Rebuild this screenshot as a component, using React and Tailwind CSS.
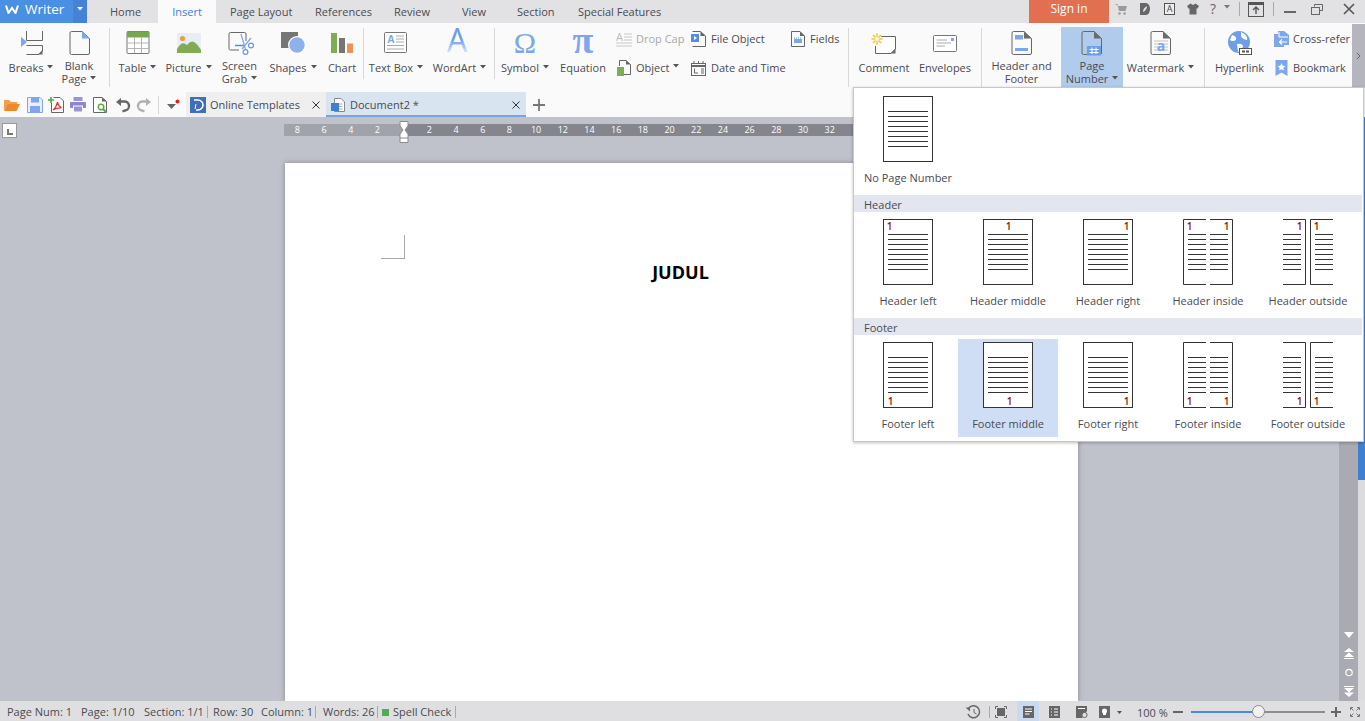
import React from "react";

const G = "#6b6b6b";
const B = "#7ea6ea";

const Caret = ({ c = "#555" }) => (
  <svg width="6" height="4" viewBox="0 0 6 4" className="inline-block ml-[4px] mb-[4px]"><path d="M0 0H6L3 3.5Z" fill={c} /></svg>
);

const I = ({ children, w = 32, h = 28, className = "" }) => (
  <svg width={w} height={h} viewBox={`0 0 ${w} ${h}`} className={`shrink-0 overflow-visible ${className}`}>{children}</svg>
);

const Doc = ({ x = 8, fold = G }) => (
  <>
    <path d={`M${x + 1.5} 2.5H${x + 12}L${x + 19.5} 9.5V24Q${x + 19.5} 25.5 ${x + 18} 25.5H${x + 1.5}Q${x} 25.5 ${x} 24V4Q${x} 2.5 ${x + 1.5} 2.5Z`} fill="#fff" fillOpacity="0" stroke="#666" />
    <path d={`M${x + 12} 2.5L${x + 19.5} 9.5H${x + 12}Z`} fill={fold} />
  </>
);

const icons = {
  breaks: (
    <I>
      <path d="M11.5 2V11.5H27.5V2" fill="none" stroke="#666" />
      <path d="M11.5 16.5H27.5V22L24 25.5H11.5" fill="none" stroke="#666" />
      <path d="M27.5 21V25.5H23Z" fill="#666" />
      <path d="M6 8L12 13L6 18Z" fill={B} />
    </I>
  ),
  blank: <I><Doc x={7} fold={B} /></I>,
  table: (
    <I>
      <rect x="5" y="2.5" width="22" height="22" rx="1" fill="#fff" stroke="#777" />
      <rect x="5" y="2.5" width="22" height="6" fill="#76a852" />
      <path d="M5 14H27M5 19.5H27M12.5 8.5V24M19.5 8.5V24" stroke="#b5b5b5" />
    </I>
  ),
  picture: (
    <I>
      <rect x="4" y="4" width="24" height="20" fill="#e9eef4" />
      <circle cx="9.5" cy="9.5" r="2.6" fill="#ee9a4d" />
      <path d="M4 24V20Q9 11 14 16Q20 7 28 21V24Z" fill="#7fac55" />
    </I>
  ),
  grab: (
    <I>
      <path d="M22 12V5Q22 3.5 20.5 3.5H6.5Q5 3.5 5 5V19.5Q5 21 6.5 21H15" fill="none" stroke="#666" />
      <path d="M11 16.5H21" stroke="#5a8be0" strokeWidth="1.5" />
      <path d="M17 5L22 22M27 9L18 20" stroke="#7ea6ea" strokeWidth="1.2" />
      <circle cx="21.5" cy="23" r="2.4" fill="#fff" stroke="#6a96e2" strokeWidth="1.2" />
      <circle cx="27" cy="16.5" r="2.4" fill="#fff" stroke="#6a96e2" strokeWidth="1.2" />
    </I>
  ),
  shapes: (
    <I>
      <rect x="4" y="3" width="17" height="16" fill="#757575" />
      <circle cx="20" cy="16" r="9" fill="#fff" />
      <circle cx="20" cy="16" r="7.7" fill="#8eb1ec" />
    </I>
  ),
  chart: (
    <I>
      <rect x="5" y="4" width="6" height="20" fill="#7fac55" />
      <rect x="13" y="9" width="6" height="15" fill="#757575" />
      <rect x="21" y="14.5" width="6" height="9.5" fill="#ec9358" />
    </I>
  ),
  textbox: (
    <I>
      <rect x="4.5" y="3.5" width="22" height="20" rx="1" fill="#fff" stroke="#777" />
      <text x="7.5" y="14" fontSize="10" fontWeight="700" fontFamily="Open Sans" fill={B}>A</text>
      <path d="M16 7H24M16 10H24M16 13H24M7 16.5H24M7 20H24" stroke="#aaa" />
    </I>
  ),
  wordart: (
    <I>
      <defs><linearGradient id="wa" x1="0" y1="0" x2="0" y2="1"><stop offset="0.5" stopColor="#6f9de8" /><stop offset="0.85" stopColor="#e4edfb" /></linearGradient></defs>
      <text x="13" y="23" textAnchor="middle" fontSize="32" fontFamily="Open Sans" fill="url(#wa)">A</text>
    </I>
  ),
  symbol: <I><text x="16" y="24" textAnchor="middle" fontSize="30" fontFamily="Liberation Serif" fill={B}>Ω</text></I>,
  pi: <I><text x="16" y="24" textAnchor="middle" fontSize="38" fontWeight="700" fontFamily="Liberation Serif" fill={B}>π</text></I>,
  comment: (
    <I>
      <path d="M7.5 7.5H27.5V20L23 24.5H7.5V17" fill="#fff" stroke="#666" />
      <path d="M27.5 19.5V24.5H22.5Z" fill="#666" />
      <circle cx="9" cy="10" r="5" fill="#fff" />
      <g stroke="#f4c531" strokeWidth="1.5"><path d="M9 4.5V15.5M3.5 10H14.5M5 6L13 14M13 6L5 14" /></g>
      <circle cx="9" cy="10" r="2" fill="#fff" />
    </I>
  ),
  envelope: (
    <I>
      <rect x="4.5" y="6.5" width="23" height="16" rx="1" fill="#fff" stroke="#777" />
      <rect x="22" y="9" width="3" height="3" fill={B} />
      <path d="M7.5 11H18M7.5 14H22M7.5 17H16" stroke="#aaa" />
    </I>
  ),
  hf: (
    <I>
      <Doc x={6} />
      <rect x="9" y="6" width="8" height="4.5" fill={B} />
      <rect x="9" y="19" width="13" height="3" fill={B} />
    </I>
  ),
  pn: (
    <I>
      <Doc x={6} />
      <rect x="11" y="17" width="14" height="9.5" fill="#6f9de8" />
      <path d="M16 18.5V25M20 18.5V25M13.5 20.5H22.5M13.5 23.5H22.5" stroke="#fff" />
    </I>
  ),
  watermark: (
    <I>
      <Doc x={6} />
      <path d="M9 12H23M9 15H23M9 18H23M9 21H23" stroke="#c2c2c2" />
      <text x="16" y="22" textAnchor="middle" fontSize="14" fontWeight="700" fontFamily="Open Sans" fill={B}>a</text>
    </I>
  ),
  link: (
    <I>
      <circle cx="15" cy="13" r="11" fill="#6f9de8" />
      <path d="M8 6Q13 7 12 11Q8 13 6 11ZM17 3Q24 6 23 11Q18 10 17 7ZM13 15Q19 14 19 18Q16 22 14 23Z" fill="#fff" />
      <rect x="15.5" y="19.5" width="12" height="6" fill="#fff" stroke="#555" />
      <path d="M18 22.5H25" stroke="#555" strokeWidth="2" strokeDasharray="3 1" />
    </I>
  ),
};

const Sep = ({ tall = true, className = "" }) => (
  <div className={`w-px shrink-0 bg-[#d8d8d8] mt-[1px] ${tall ? "h-[59px]" : "h-[51px]"} ${className}`} />
);

const Big = ({ w, icon, lines, caret, active, className = "" }) => (
  <div className={`${w} ${className} h-[60px] shrink-0 flex flex-col items-center ${active ? "bg-[#b1cbec]" : ""}`}>
    <div className="mt-[2px] h-[28px]">{icons[icon]}</div>
    <div className={`mt-[2px] text-center leading-[13px] whitespace-nowrap ${lines.length === 1 ? "pt-[2px]" : ""}`}>
      {lines.map((l, i) => (
        <div key={l}>
          {l}
          {caret && i === lines.length - 1 && <Caret />}
        </div>
      ))}
    </div>
  </div>
);

const SmallRow = ({ icon, text, caret, className = "", textClass = "" }) => (
  <div className={`h-[24px] flex items-center whitespace-nowrap ${className}`}>
    {icon}
    <span className={textClass}>{text}</span>
    {caret && <Caret />}
  </div>
);

const pageLines = (x1, x2) => [15, 20, 25, 30, 35, 40, 45, 50].map((y) => <path key={`${x1}-${y}`} d={`M${x1} ${y}.5H${x2}`} stroke="#333" />);
const One = ({ x, foot }) => (
  <text x={x + 0.5} y={foot ? 63 : 11} textAnchor="middle" fontSize="10" fontWeight="600" fontFamily="Open Sans" fill="#8b1a00">1</text>
);

const Thumb = ({ kind, nums = [], foot }) => (
  <svg width="50" height="66" viewBox="0 0 50 66" className="shrink-0">
    {kind === "single" && (
      <>
        <rect x="0.5" y="0.5" width="49" height="65" fill="#fff" stroke="#333" />
        {pageLines(5, 45)}
      </>
    )}
    {kind === "inside" && (
      <>
        <path d="M23 0.5H0.5V65.5H23M27 0.5H49.5V65.5H27" fill="#fff" stroke="#333" />
        {pageLines(5, 23)}
        {pageLines(27, 45)}
      </>
    )}
    {kind === "outside" && (
      <>
        <path d="M0 0.5H22.5V65.5H0M50 0.5H27.5V65.5H50" fill="#fff" stroke="#333" />
        {pageLines(0, 18)}
        {pageLines(32, 50)}
      </>
    )}
    {nums.map((x) => <One key={x} x={x} foot={foot} />)}
  </svg>
);

const Cell = ({ label, active, ...p }) => (
  <div className={`w-[100px] h-[98px] flex flex-col items-center pt-[3px] ${active ? "bg-[#d0def5]" : ""}`}>
    <Thumb {...p} />
    <div className="mt-[8px] leading-[16px] whitespace-nowrap">{label}</div>
  </div>
);

const Row = ({ foot, name }) => (
  <div className="flex pl-[4px] pt-[4px] pb-[4px]">
    <Cell label={`${name} left`} kind="single" nums={[foot ? 7 : 6]} foot={foot} />
    <Cell label={`${name} middle`} kind="single" nums={[foot ? 26 : 25]} foot={foot} active={foot} />
    <Cell label={`${name} right`} kind="single" nums={[43]} foot={foot} />
    <Cell label={`${name} inside`} kind="inside" nums={[6, 43]} foot={foot} />
    <Cell label={`${name} outside`} kind="outside" nums={[16, 33]} foot={foot} />
  </div>
);

const Section = ({ children }) => (
  <div className="h-[17px] bg-[#e3e6ef] pl-[10px] leading-[19px] mr-[1px]">{children}</div>
);

const rulerLeft = ["8", "6", "4", "2"];
const rulerRight = ["2", "4", "6", "8", "10", "12", "14", "16", "18", "20", "22", "24", "26", "28", "30", "32"];

export default function App() {
  return (
    <div className="relative w-[1365px] h-[721px] overflow-hidden flex flex-col bg-[#fafafa] text-[#4a4a52] text-[11px] font-['Open_Sans','Noto_Sans',sans-serif]">
      {/* title + tabs */}
      <div className="h-[23px] shrink-0 bg-[#e2e2e4] flex items-center">
        <div className="w-[73px] h-full bg-[#4a90e2] flex items-center pl-[5px] pb-[5px] text-white text-[13.5px] font-medium">
          <svg width="14" height="9" viewBox="0 0 14 9" className="mr-[6px] shrink-0"><path d="M1 0.5L3.5 8L7 3L10.5 8L13 0.5" fill="none" stroke="#fff" strokeWidth="2" /></svg>
          Writer
        </div>
        <div className="w-[14px] h-full bg-[#4382d6] flex items-center justify-center pb-[5px]">
          <svg width="6" height="4" viewBox="0 0 6 4"><path d="M0 0H6L3 3.5Z" fill="#fff" /></svg>
        </div>
        <div className="w-[71px] pl-[23px] pt-[2px] text-[#4d4d55]">Home</div>
        <div className="w-[58px] h-full bg-[#fafafa] text-center leading-[24px] text-[#3f7fcf]">Insert</div>
        <div className="w-[14px]" />
        <div className="w-[85px] pt-[2px]">Page Layout</div>
        <div className="w-[79px] pt-[2px]">References</div>
        <div className="w-[68px] pt-[2px]">Review</div>
        <div className="w-[55px] pt-[2px]">View</div>
        <div className="w-[61px] pt-[2px]">Section</div>
        <div className="w-[451px] pt-[2px] whitespace-nowrap">Special Features</div>
        <div className="w-[80px] h-full bg-[#e07050] text-white text-[12px] flex items-center justify-center pb-[5px]">Sign in</div>
        <div className="flex items-center h-full pb-[5px]">
          <I w={12} h={12} className="ml-[6px]"><path d="M0 1H2.5L4 8H10.5L12 3H3" fill="#9a9a9a" /><circle cx="4.5" cy="10.5" r="1.3" fill="#9a9a9a" /><circle cx="9.5" cy="10.5" r="1.3" fill="#9a9a9a" /></I>
          <I w={10} h={12} className="ml-[13px]"><path d="M0 0H6A4 6 0 0 1 6 12H0Z" fill="#666" /><path d="M3 9Q3 5 7 3Q7 7 3 9Z" fill="#e2e2e4" /></I>
          <I w={11} h={12} className="ml-[14px]"><rect x="0.5" y="0.5" width="10" height="11" fill="#eee" stroke="#555" /><text x="5.5" y="9" textAnchor="middle" fontSize="9" fontFamily="Open Sans" fill="#444">A</text></I>
          <I w={12} h={12} className="ml-[12px]"><path d="M3.5 0.5L6 2L8.5 0.5L12 3L10.5 5.5H9.5V11.5H2.5V5.5H1.5L0 3Z" fill="#666" /></I>
          <div className="ml-[11px] w-[10px] text-[14px] leading-none text-[#666]">?</div>
          <Caret c="#777" />
          <div className="ml-[9px] w-px h-[14px] bg-[#aaa]" />
          <I w={16} h={15} className="ml-[8px]"><rect x="0.5" y="0.5" width="15" height="14" fill="none" stroke="#555" /><path d="M0.5 2H15.5" stroke="#555" strokeWidth="2" /><path d="M8 12V5M5 8L8 5L11 8" fill="none" stroke="#555" strokeWidth="1.4" /></I>
          <div className="ml-[9px] w-px h-[14px] bg-[#aaa]" />
          <div className="ml-[10px] w-[12px] h-[2px] bg-[#666] mt-[5px]" />
          <I w={12} h={11} className="ml-[15px]"><path d="M3.5 2.5V0.5H11.5V6.5H9" fill="none" stroke="#666" /><rect x="0.5" y="3.5" width="8" height="7" fill="none" stroke="#666" /></I>
          <I w={10} h={10} className="ml-[21px]"><path d="M0 0L10 10M10 0L0 10" stroke="#555" strokeWidth="1.6" /></I>
        </div>
      </div>

      {/* ribbon */}
      <div className="h-[69px] shrink-0 flex">
        <div className="w-[1352px] pt-[4px] pl-[7px] flex items-start">
          <Big w="w-[48px]" icon="breaks" lines={["Breaks"]} caret />
          <Big w="w-[48px]" icon="blank" lines={["Blank", "Page"]} caret />
          <Sep className="ml-[6px]" />
          <Big w="w-[45px]" className="ml-[5px]" icon="table" lines={["Table"]} caret />
          <Big w="w-[57px]" icon="picture" lines={["Picture"]} caret />
          <Big w="w-[45px]" icon="grab" lines={["Screen", "Grab"]} caret />
          <Big w="w-[62px]" icon="shapes" lines={["Shapes"]} caret />
          <Big w="w-[36px]" icon="chart" lines={["Chart"]} />
          <Sep tall={false} className="ml-[3px]" />
          <Big w="w-[64px]" icon="textbox" lines={["Text Box"]} caret />
          <Big w="w-[63px]" icon="wordart" lines={["WordArt"]} caret />
          <Sep tall={false} className="ml-[3px]" />
          <Big w="w-[60px]" icon="symbol" lines={["Symbol"]} caret />
          <Big w="w-[56px]" icon="pi" lines={["Equation"]} />
          <div className="w-[79px] shrink-0 pl-[5px]">
            <SmallRow
              textClass="text-[#a9a9a9]"
              text="Drop Cap"
              icon={<I w={16} h={16} className="mr-[4px]"><text x="0" y="10" fontSize="11" fontFamily="Open Sans" fill="#bbb">A</text><path d="M8 3H16M8 6H16M8 9H16M0 12H16M0 15H16" stroke="#c8c8c8" /></I>}
            />
            <SmallRow
              className="mt-[5px]"
              text="Object"
              caret
              icon={<I w={16} h={16} className="mr-[4px]"><path d="M3.5 6V0.5H10L14.5 4.5V14.5H8" fill="none" stroke="#666" /><path d="M10 0.5L14.5 4.5H10Z" fill="#666" /><rect x="1" y="7" width="7" height="9" fill="#7fac55" /></I>}
            />
          </div>
          <div className="w-[100px] shrink-0 pl-[1px]">
            <SmallRow
              text="File Object"
              icon={<I w={15} h={16} className="mr-[5px]"><path d="M1.5 0.5H9.5L14.5 5V15.5H1.5" fill="none" stroke="#666" /><path d="M9.5 0.5L14.5 5H9.5Z" fill="#666" /><rect x="0" y="3" width="8" height="8" fill="#5a8be0" /><path d="M3 5L6 7L3 9Z" fill="#fff" /></I>}
            />
            <SmallRow
              className="mt-[5px]"
              text="Date and Time"
              icon={<I w={15} h={15} className="mr-[5px]"><rect x="0.5" y="2.5" width="14" height="12" fill="none" stroke="#666" /><path d="M0.5 5H14.5" stroke="#666" strokeWidth="2" /><path d="M3 0V3M7.5 0V3M12 0V3" stroke="#666" /><path d="M3.5 7.5V12H7M10 8H13M10 10H13M10 12H13" fill="none" stroke="#666" /></I>}
            />
          </div>
          <div className="w-[58px] shrink-0 pl-[1px]">
            <SmallRow
              text="Fields"
              icon={<I w={14} h={16} className="mr-[5px]"><path d="M0.5 15.5V0.5H9L13.5 5V15.5Z" fill="none" stroke="#666" /><path d="M9 0.5L13.5 5H9Z" fill="#666" /><rect x="3" y="8" width="8" height="4" fill="#7ea6ea" /><path d="M3 7H11" stroke="#5a8be0" strokeDasharray="1 1" /></I>}
            />
          </div>
          <Sep />
          <Big w="w-[70px]" icon="comment" lines={["Comment"]} />
          <Big w="w-[52px]" icon="envelope" lines={["Envelopes"]} />
          <Sep className="ml-[10px]" />
          <Big w="w-[79px]" icon="hf" lines={["Header and", "Footer"]} />
          <Big w="w-[62px]" icon="pn" lines={["Page", "Number"]} caret active />
          <Big w="w-[75px]" icon="watermark" lines={["Watermark"]} caret />
          <Sep className="ml-[6px]" />
          <Big w="w-[69px]" icon="link" lines={["Hyperlink"]} />
          <div className="w-[78px] shrink-0">
            <SmallRow
              text="Cross-refer"
              icon={<I w={15} h={16} className="mr-[4px]"><path d="M0 3H4V0H10L15 4V14H10V16H0Z" fill="#7ea6ea" /><path d="M5 1V6H14" fill="none" stroke="#fff" /><path d="M13 11H6M8 8.5L5.5 11L8 13.5" fill="none" stroke="#fff" strokeWidth="1.2" /></I>}
            />
            <SmallRow
              className="mt-[5px]"
              text="Bookmark"
              icon={<I w={15} h={16} className="mr-[4px]"><path d="M1.5 0H13.5V16L7.5 12.5L1.5 16Z" fill="#7ea6ea" /><path d="M7.5 3L8.7 5.8L11.5 6L9.3 7.9L10 10.5L7.5 9.2L5 10.5L5.7 7.9L3.5 6L6.3 5.8Z" fill="#fff" /></I>}
            />
          </div>
        </div>
        <div className="w-[13px] h-[64px] mt-[1px] bg-[#b5b6bd] flex items-center justify-center">
          <svg width="5" height="8" viewBox="0 0 5 8"><path d="M1 1L4 4L1 7" fill="none" stroke="#666" /></svg>
        </div>
      </div>

      {/* quick access + doc tabs */}
      <div className="h-[25px] shrink-0 flex items-center">
        <I w={16} h={14} className="ml-[4px]"><path d="M0 13V2H5L7 4H13V6H4Z" fill="#f0a050" /><path d="M0 13L3.5 6H16L12.5 13Z" fill="#ee8a2e" /></I>
        <I w={16} h={16} className="ml-[7px]"><path d="M0.5 0.5H13L15.5 3V15.5H0.5Z" fill="#e8f0fc" stroke="#7ea6ea" /><rect x="4" y="1" width="8" height="4.5" fill="#7ea6ea" /><rect x="3" y="9" width="10" height="6" fill="#7ea6ea" /></I>
        <I w={16} h={16} className="ml-[5px]"><path d="M5.5 0.5H12L15.5 4V15.5H3.5V6" fill="#fff" stroke="#666" /><path d="M3 0V6M0 3H6" stroke="#56a83f" strokeWidth="1.6" /><path d="M5 13Q8 11 9.5 5Q10 9 13.5 11Q9 10.5 5 13Z" fill="none" stroke="#d33" strokeWidth="1.2" /></I>
        <I w={16} h={15} className="ml-[6px]"><rect x="3.5" y="0" width="9" height="4" fill="#9a95d6" /><rect x="0" y="5" width="16" height="6" rx="1" fill="#8c87cc" /><rect x="3.5" y="9" width="9" height="6" fill="#9a95d6" stroke="#fafafa" /></I>
        <I w={16} h={16} className="ml-[7px]"><path d="M0.5 0.5H9L13.5 4.5V15.5H0.5Z" fill="#fff" stroke="#666" /><path d="M9 0.5L13.5 4.5H9Z" fill="#666" /><circle cx="8" cy="10" r="2.8" fill="none" stroke="#56a83f" strokeWidth="1.4" /><path d="M10 12L13.5 15.5" stroke="#56a83f" strokeWidth="1.8" /></I>
        <I w={13} h={14} className="ml-[7px]"><path d="M3 3.5H8A4 4 0 0 1 9 12.5L6.5 13.5" fill="none" stroke="#666" strokeWidth="2.4" /><path d="M5 0V8L0 4Z" fill="#666" /></I>
        <I w={13} h={14} className="ml-[9px]"><path d="M10 3.5H5A4 4 0 0 0 4 12.5L6.5 13.5" fill="none" stroke="#b0b0b0" strokeWidth="2.4" /><path d="M8 0V8L13 4Z" fill="#b0b0b0" /></I>
        <div className="ml-[7px] w-px h-[18px] bg-[#d8d8d8]" />
        <I w={13} h={12} className="ml-[8px]"><path d="M0 5H9L4.5 10Z" fill="#666" /><circle cx="10.5" cy="2.5" r="2" fill="#e02020" /></I>
        <div className="ml-[6px] w-[140px] h-full bg-[#efefef] flex items-center pl-[4px]">
          <I w={16} h={16}><rect width="16" height="16" fill="#3f6fb8" /><path d="M4 3H8A5 5 0 0 1 8 13H6" fill="none" stroke="#fff" strokeWidth="1.6" /><path d="M6 7L5 12" stroke="#fff" /></I>
          <span className="ml-[4px] w-[102px] pt-[2px] whitespace-nowrap">Online Templates</span>
          <I w={8} h={8}><path d="M0.5 0.5L7.5 7.5M7.5 0.5L0.5 7.5" stroke="#333" /></I>
        </div>
        <div className="w-[200px] h-full bg-[#d9e4f1] border-b-2 border-[#7aa3dc] flex items-center pl-[5px] pt-[2px]">
          <I w={14} h={14}><path d="M3.5 0.5H10L13.5 4V13.5H3.5Z" fill="#fff" stroke="#888" /><path d="M6 6H11.5M6 8.5H11.5M6 11H11.5" stroke="#aaa" /><rect x="0" y="5" width="8" height="8" fill="#3f7fd0" /></I>
          <span className="ml-[5px] w-[162px] pt-[2px] whitespace-nowrap">Document2 *</span>
          <I w={8} h={8}><path d="M0.5 0.5L7.5 7.5M7.5 0.5L0.5 7.5" stroke="#333" /></I>
        </div>
        <I w={12} h={12} className="ml-[7px]"><path d="M6 0V12M0 6H12" stroke="#777" strokeWidth="1.8" /></I>
      </div>

      {/* workspace */}
      <div className="h-[584px] shrink-0 flex bg-[#bfc2cb]">
        <div className="w-[1339px] flex flex-col">
          <div className="h-[46px] shrink-0 flex items-start">
            <div className="ml-[2px] mt-[6px] w-[15px] h-[15px] bg-white border border-[#9a9a9a] flex items-end justify-center pb-[2px]">
              <div className="w-[6px] h-[6px] border-l-2 border-b-2 border-[#777] ml-[1px]" />
            </div>
            <div className="relative ml-[267px] mt-[7px] h-[12px] flex text-white text-[9px] leading-[12px]">
              <div className="w-[120px] bg-[#a1a3ab] flex">
                {rulerLeft.map((n) => <div key={n} className="w-[26.7px] text-center">{n}</div>)}
              </div>
              <div className="w-[460px] bg-[#85858d] flex pl-[12px]">
                {rulerRight.map((n) => <div key={n} className="w-[26.7px] shrink-0 text-center">{n}</div>)}
              </div>
              <svg width="10" height="22" viewBox="0 0 10 22" className="absolute left-[115px] -top-[3px]">
                <path d="M1 0.5H9V5L6 9L9 13V21.5H1V13L4 9L1 5Z" fill="#fff" stroke="#8a8a8a" />
                <path d="M1 17H9" stroke="#8a8a8a" />
              </svg>
            </div>
          </div>
          <div className="ml-[285px] w-[793px] flex-1 bg-white shadow-[0_0_5px_rgba(80,80,90,0.5)] pt-[72px] pl-[96px]">
            <div className="w-[24px] h-[24px] border-r border-b border-[#aaa]" />
            <div className="-ml-[96px] mt-[3px] text-center font-bold text-[18px] leading-[20px] text-black pr-[2px]">JUDUL</div>
          </div>
        </div>
        <div className="w-[19px] bg-[#a9aab2] flex flex-col items-center justify-end pb-[4px] gap-[8px]">
          <svg width="10" height="11" viewBox="0 0 10 11"><path d="M0 3H10L5 9Z" fill="#fff" /></svg>
          <svg width="10" height="11" viewBox="0 0 10 11"><path d="M5 0L10 4H0ZM5 4.5L10 9H0Z M0 10H10V11H0Z" fill="#fff" /></svg>
          <svg width="10" height="11" viewBox="0 0 10 11"><circle cx="5" cy="5.5" r="3.2" fill="none" stroke="#fff" strokeWidth="1.2" /></svg>
          <svg width="10" height="11" viewBox="0 0 10 11"><path d="M0 0H10V1H0ZM0 2H10L5 6.5ZM0 6.5H10L5 11Z" fill="#fff" /></svg>
        </div>
        <div className="w-[7px] bg-[#dcdcde]">
          <div className="h-[363px] bg-[#3f7fd2]" />
        </div>
      </div>

      {/* status bar */}
      <div className="h-[20px] shrink-0 bg-[#dfdfe1] flex items-center whitespace-nowrap pt-[2px]">
        <div className="w-[965px] flex items-center">
          <div className="w-[81px] pl-[7px] pt-[1px]">Page Num: 1</div>
          <div className="w-[63px] pt-[1px]">Page: 1/10</div>
          <div className="w-[63px] pt-[1px]">Section: 1/1</div>
          <div className="w-px h-[12px] bg-[#aaa]" />
          <div className="w-[48px] ml-[5px] pt-[1px]">Row: 30</div>
          <div className="w-[54px] pt-[1px]">Column: 1</div>
          <div className="w-px h-[12px] bg-[#aaa]" />
          <div className="w-[54px] ml-[7px] pt-[1px]">Words: 26</div>
          <div className="w-px h-[12px] bg-[#aaa]" />
          <div className="w-[7px] h-[7px] bg-[#4caf50] ml-[4px]" />
          <div className="w-[62px] ml-[4px] pt-[1px]">Spell Check</div>
          <div className="w-px h-[12px] bg-[#aaa]" />
        </div>
        <I w={16} h={14}><path d="M3.5 3.5A6 6 0 1 1 3 9" fill="none" stroke="#666" strokeWidth="1.5" /><path d="M0.5 2.5H5V6.5Z" fill="#666" /><path d="M9 4V7.5L11.5 9" fill="none" stroke="#666" /></I>
        <div className="ml-[8px] w-px h-[12px] bg-[#aaa]" />
        <I w={12} h={12} className="ml-[5px]"><path d="M0.5 3V0.5H3M9 0.5H11.5V3M11.5 9V11.5H9M3 11.5H0.5V9" fill="none" stroke="#666" /><rect x="2" y="2" width="8" height="8" fill="#666" /></I>
        <div className="ml-[10px] w-[22px] h-[20px] -mt-[2px] pt-[1px] bg-[#c9d9ef] flex items-center justify-center">
          <I w={11} h={12}><rect width="11" height="12" fill="#666" /><path d="M2 3H9M2 5.5H9M2 8H6.5" stroke="#fff" /></I>
        </div>
        <I w={11} h={12} className="ml-[10px]"><rect width="11" height="12" fill="#666" /><path d="M2 3H3M5 3H9M2 6H3M5 6H9M2 9H3M5 9H9" stroke="#fff" /></I>
        <I w={11} h={12} className="ml-[16px]"><path d="M0 0H11V5L6 12H0Z" fill="#666" /><path d="M2 2.5H9" stroke="#fff" /><circle cx="8.5" cy="9" r="2.6" fill="#dfdfe1" stroke="#666" /></I>
        <I w={11} h={12} className="ml-[12px]"><rect width="11" height="12" fill="#666" /><path d="M3 5A2.5 2.5 0 1 1 8 5Q8 6.5 7 7.5V9H4V7.5Q3 6.5 3 5Z" fill="#fff" /></I>
        <svg width="5" height="3" viewBox="0 0 5 3" className="ml-[7px]"><path d="M0 0H5L2.5 3Z" fill="#555" /></svg>
        <div className="ml-[15px] w-[30px] text-[11px] leading-none">100 %</div>
        <div className="ml-[6px] w-[10px] h-[2px] bg-[#666]" />
        <div className="relative ml-[8px] w-[134px] h-[2px] bg-[#8c8c8c]">
          <div className="w-[62px] h-full bg-[#4a8ae0]" />
          <div className="absolute left-[61px] -top-[6px] w-[13px] h-[13px] rounded-full bg-[#f2f2f2] border border-[#8c8c8c]" />
        </div>
        <I w={10} h={10} className="ml-[6px]"><path d="M5 0V10M0 5H10" stroke="#666" strokeWidth="2" /></I>
        <I w={10} h={10} className="ml-[9px]"><path d="M0.5 3V0.5H3M7 0.5H9.5V3M9.5 7V9.5H7M3 9.5H0.5V7M1 1L3.5 3.5M9 1L6.5 3.5M9 9L6.5 6.5M1 9L3.5 6.5" fill="none" stroke="#777" /></I>
      </div>

      {/* page number menu */}
      <div className="absolute left-[853px] top-[87px] w-[511px] h-[355px] bg-white border border-[#c8c8c8] shadow-[0_1px_3px_rgba(0,0,0,0.25)]">
        <div className="flex pl-[4px] pt-[5px] pb-[4px]">
          <Cell label="No Page Number" kind="single" />
        </div>
        <Section>Header</Section>
        <Row name="Header" />
        <Section>Footer</Section>
        <Row name="Footer" foot />
      </div>
    </div>
  );
}
